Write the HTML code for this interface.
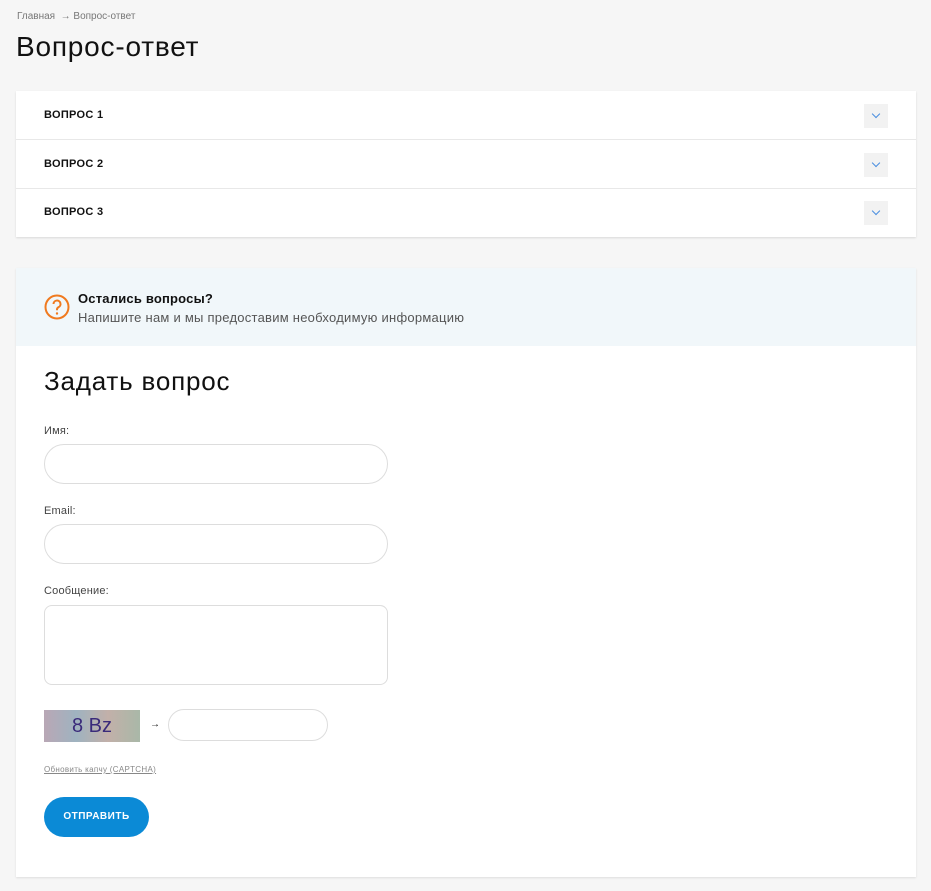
<!DOCTYPE html>
<html><head><meta charset="utf-8"><style>
*{box-sizing:border-box;margin:0;padding:0}
body{width:931px;height:891px;background:#f6f6f6;font-family:"Liberation Sans",sans-serif;color:#111;position:relative;overflow:hidden}
.a{position:absolute}
.crumb{left:17px;top:11px;font-size:10px;color:#777}
h1{position:absolute;left:16px;top:31px;font-size:28px;font-weight:400;color:#111;letter-spacing:.8px}
.acc{left:16px;top:91px;width:900px;height:146px;background:#fff;box-shadow:0 1px 2px rgba(0,0,0,.12)}
.row{position:absolute;left:0;width:900px;height:49px;border-bottom:1px solid #e8e8e8}
.row span{position:absolute;left:28px;top:18px;font-size:11px;font-weight:700;letter-spacing:.3px}
.row i{position:absolute;left:848px;top:13px;width:24px;height:24px;background:#f2f2f2}
.row i:after{content:"";position:absolute;left:9px;top:7px;width:5px;height:5px;border-right:1px solid #4a8ee0;border-bottom:1px solid #4a8ee0;transform:rotate(45deg)}
.form{left:16px;top:268px;width:900px;height:609px;background:#fff;box-shadow:0 1px 2px rgba(0,0,0,.1)}
.info{position:absolute;left:0;top:0;width:900px;height:78px;background:#f1f7fa}
.lbl{position:absolute;left:28px;font-size:11px;color:#444;letter-spacing:.2px}
.inp{position:absolute;left:28px;width:344px;height:40px;border:1px solid #ddd;border-radius:20px;background:#fff}
</style></head><body>
<div class="a crumb">Главная &nbsp;→ Вопрос-ответ</div>
<h1>Вопрос-ответ</h1>
<div class="a acc">
<div class="row" style="top:0"><span>ВОПРОС 1</span><i></i></div>
<div class="row" style="top:49px"><span>ВОПРОС 2</span><i></i></div>
<div class="row" style="top:97px;border:none"><span>ВОПРОС 3</span><i></i></div>
</div>
<div class="a form">
<div class="info">
<svg style="position:absolute;left:28px;top:26px" width="26" height="26" viewBox="0 0 26 26"><circle cx="13" cy="13" r="11.5" fill="none" stroke="#f07a1f" stroke-width="2"/><path d="M9.5 10a3.5 3.5 0 1 1 5 3.2c-1 .5-1.5 1.2-1.5 2.3v.7" fill="none" stroke="#f07a1f" stroke-width="2"/><circle cx="13" cy="19.5" r="1.2" fill="#f07a1f"/></svg>
<div style="position:absolute;left:62px;top:23px;font-size:13px;font-weight:700;letter-spacing:.2px">Остались вопросы?</div>
<div style="position:absolute;left:62px;top:42px;font-size:13px;color:#555;letter-spacing:.25px">Напишите нам и мы предоставим необходимую информацию</div>
</div>
<div style="position:absolute;left:28px;top:98px;font-size:26px;letter-spacing:.8px">Задать вопрос</div>
<div class="lbl" style="top:157px">Имя:</div>
<div class="inp" style="top:176px"></div>
<div class="lbl" style="top:237px">Email:</div>
<div class="inp" style="top:256px"></div>
<div class="lbl" style="top:317px">Сообщение:</div>
<div class="inp" style="top:337px;height:80px;border-radius:8px"></div>
<div style="position:absolute;left:28px;top:442px;width:96px;height:32px;background:linear-gradient(90deg,#b9a7b5,#9fb3c0,#c2b0a9,#a9b8a8);color:#3a2a7a;font-size:20px;text-align:center;line-height:32px">8 Bz</div>
<div style="position:absolute;left:134px;top:451px;font-size:10px">→</div>
<div class="inp" style="left:152px;top:441px;width:160px;height:32px"></div>
<div style="position:absolute;left:28px;top:497px;font-size:8px;color:#888;text-decoration:underline;letter-spacing:.3px">Обновить капчу (CAPTCHA)</div>
<div style="position:absolute;left:28px;top:529px;width:105px;height:40px;border-radius:20px;background:#0b8ad6;color:#fff;font-size:10px;font-weight:700;text-align:center;line-height:40px;letter-spacing:.5px">ОТПРАВИТЬ</div>
</div>
</body></html>
